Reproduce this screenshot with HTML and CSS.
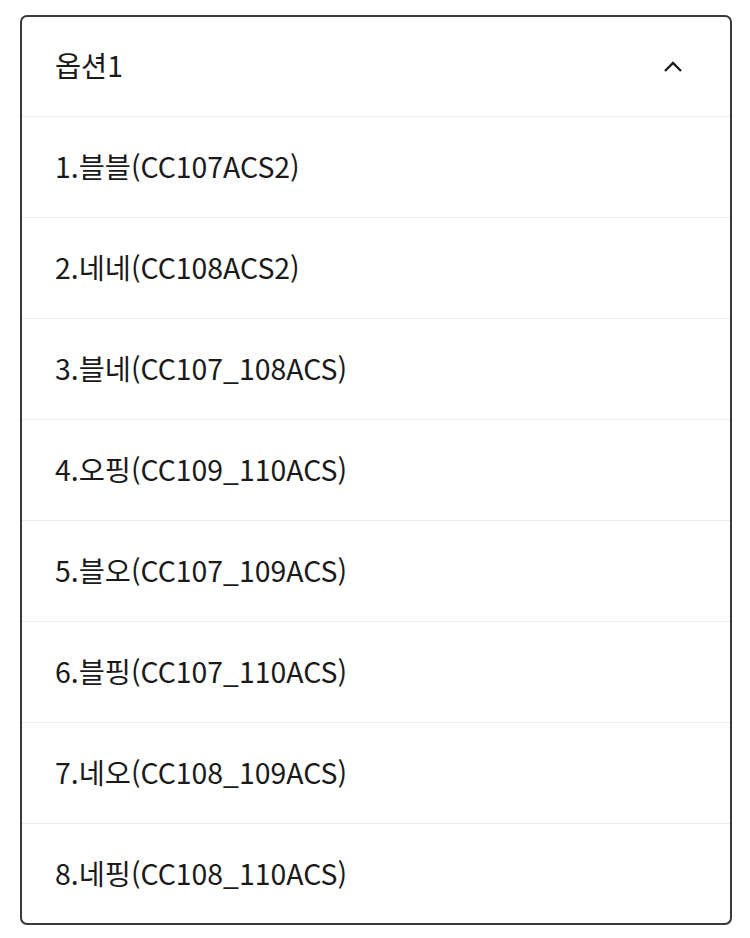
FILE: index.html
```
<!DOCTYPE html>
<html lang="ko">
<head>
<meta charset="utf-8">
<link rel="stylesheet" href="styles.css">
</head>
<body>
<div class="select">
  <div class="head">
    <span class="label">옵션1</span>
    <svg class="chev" width="20" height="12" viewBox="0 0 20 12"><path d="M2 10 L10 2 L18 10" fill="none" stroke="#1a1a1a" stroke-width="2.3"/></svg>
  </div>
  <ul class="list">
    <li>1.블블(CC107ACS2)</li>
    <li>2.네네(CC108ACS2)</li>
    <li>3.블네(CC107_108ACS)</li>
    <li>4.오핑(CC109_110ACS)</li>
    <li>5.블오(CC107_109ACS)</li>
    <li>6.블핑(CC107_110ACS)</li>
    <li>7.네오(CC108_109ACS)</li>
    <li>8.네핑(CC108_110ACS)</li>
  </ul>
</div>
</body>
</html>
```
FILE: styles.css
```
html, body { margin: 0; padding: 0; background: #fff; }
body { padding: 15px 18px 0 20px; font-family: "Noto Sans CJK KR", "Noto Sans", sans-serif; color: #1a1a1a; }
.select {
  width: 712px;
  box-sizing: border-box;
  border: 2px solid #3a3a3a;
  border-radius: 7px;
  overflow: hidden;
}
.head {
  height: 100px;
  display: flex;
  align-items: center;
  justify-content: space-between;
  padding: 0 47px 4px 33px;
  border-bottom: 1px solid #ececec;
  box-sizing: border-box;
}
.label, .list li { font-size: 28.4px; letter-spacing: 0; }
.chev { display: block; margin-top: 4px; }
.list { list-style: none; margin: 0; padding: 0; }
.list li {
  height: 101px;
  box-sizing: border-box;
  display: flex;
  align-items: center;
  padding: 0 0 3px 33px;
  border-bottom: 1px solid #ececec;
}
.list li:last-child { border-bottom: none; height: 99px; }
```
